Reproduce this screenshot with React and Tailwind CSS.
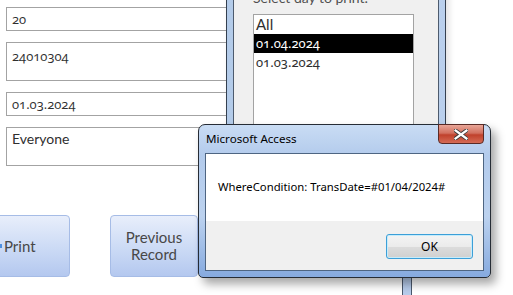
import React from "react";

function Field({ h, children }) {
  return (
    <div
      className={`w-[225px] ${h} border border-[#a3a3a3] bg-white px-[5px] text-[14px] leading-[20px] text-[#2f2f2f]`}
    >
      {children}
    </div>
  );
}

function FormButton({ className = "", children }) {
  return (
    <div
      className={`flex h-[62px] w-[88px] shrink-0 items-center justify-center rounded-[4px] border border-[#a6bce6] bg-[linear-gradient(to_bottom,#e8eefb,#cbdaf5_55%,#b4c8ef)] text-center text-[15px] leading-[17px] text-[#474747] ${className}`}
    >
      {children}
    </div>
  );
}

export default function App() {
  return (
    <div className="relative h-[295px] w-[513px] overflow-hidden bg-white font-['Lato',sans-serif]">
      {/* underlying form */}
      <div className="flex flex-col gap-[11px] pl-[6px] pt-[7px]">
        <Field h="h-[24px]">
          <div className="pt-[1px] font-['Open_Sans',sans-serif] text-[13px] oldstyle-nums">20</div>
        </Field>
        <Field h="h-[39px]">
          <div className="pt-[3px] font-['Open_Sans',sans-serif] text-[13px] oldstyle-nums">24010304</div>
        </Field>
        <Field h="h-[24px]">
          <div className="pt-[1px] font-['Open_Sans',sans-serif] text-[13px] oldstyle-nums">01.03.2024</div>
        </Field>
        <Field h="h-[39px]">
          <div className="pt-[1px]">Everyone</div>
        </Field>
      </div>

      <div className="mt-[49px] flex gap-[40px]">
        <FormButton className="ml-[-18px] !justify-start pl-[4px]">
          <span className="mr-[2px] flex h-[16px] w-[15px] items-center justify-end">
            <span className="h-[4px] w-[2px] bg-[#4d8fe0]" />
          </span>
          <span>Print</span>
        </FormButton>
        <FormButton>
          Previous
          <br />
          Record
        </FormButton>
      </div>

      {/* background popup window */}
      <div className="absolute left-[226px] top-[-60px] h-[320px] w-[220px] rounded-[6px] border border-[#34404f] bg-[linear-gradient(to_right,#b3cbe9,#c4d8f1_40%,#b9cfec)] px-[6px] pb-[6px] pt-[30px] shadow-[3px_0_6px_rgba(0,0,0,0.12)]">
        <div className="h-full border border-[#4d5b6e] bg-[#f0f0f0] pl-[19px] pt-[18px]">
          <div className="h-[16px] text-[14px] leading-[16px] text-[#505050]">
            Select day to print:
          </div>
          <div className="mt-[8px] h-[260px] w-[161px] border border-[#a3a3a3] bg-white text-[13px] leading-[19px] text-[#2f2f2f]">
            <div className="h-[19px] pl-[2px] text-[15px]">All</div>
            <div className="h-[19px] bg-black pl-[2px] font-['Noto_Sans',sans-serif] text-white oldstyle-nums">
              01.04.2024
            </div>
            <div className="h-[19px] pl-[2px] font-['Noto_Sans',sans-serif] oldstyle-nums">01.03.2024</div>
          </div>
        </div>
      </div>

      {/* small frame piece below dialog */}
      <div className="absolute left-[402px] top-[265px] h-[40px] w-[10px] border-x border-[#4a586c] bg-[#b6cbea]" />

      {/* Microsoft Access message box */}
      <div className="absolute left-[198px] top-[124px] flex h-[154px] w-[293px] flex-col rounded-t-[7px] rounded-b-[5px] border border-[#262c35] bg-[linear-gradient(to_bottom,#c9dcf4,#b3cbec_20%,#bcd2ef_60%,#86aadf)] px-[6px] pb-[6px] shadow-[5px_6px_10px_rgba(0,0,0,0.35)]">
        <div className="flex h-[28px] items-start justify-between">
          <div className="pl-[1px] pt-[6px] font-['Noto_Sans',sans-serif] text-[11.6px] leading-[16px] text-black">
            Microsoft Access
          </div>
          <div className="mt-[-1px] flex h-[20px] w-[46px] items-center justify-center rounded-b-[4px] border border-[#5a2a25] bg-[linear-gradient(to_bottom,#e8a597,#d2705f_45%,#c0412c_55%,#d56b55)]">
            <svg width="14" height="11" viewBox="0 0 14 11">
              <path
                d="M1.5 1.5 L12.5 9.5 M12.5 1.5 L1.5 9.5"
                stroke="#3a3a3a"
                strokeWidth="4"
                strokeLinecap="square"
              />
              <path
                d="M1.5 1.5 L12.5 9.5 M12.5 1.5 L1.5 9.5"
                stroke="#ffffff"
                strokeWidth="2.2"
                strokeLinecap="square"
              />
            </svg>
          </div>
        </div>
        <div className="flex flex-1 flex-col border border-[#4e6582] bg-[#f0f0f0]">
          <div className="flex h-[67px] items-center bg-white pl-[12px] font-['Noto_Sans',sans-serif] text-[11.3px] text-black">
            WhereCondition: TransDate=#01/04/2024#
          </div>
          <div className="flex flex-1 items-start justify-end pr-[10px] pt-[13px]">
            <div className="flex h-[25px] w-[87px] items-center justify-center rounded-[3px] border border-[#3c9fd8] bg-[linear-gradient(to_bottom,#f4f4f4,#ebebeb_50%,#dcdcdc_51%,#d0d0d0)] font-['Noto_Sans',sans-serif] text-[12px] text-black shadow-[inset_0_0_0_1px_#c6ecfb]">
              OK
            </div>
          </div>
        </div>
      </div>
    </div>
  );
}
